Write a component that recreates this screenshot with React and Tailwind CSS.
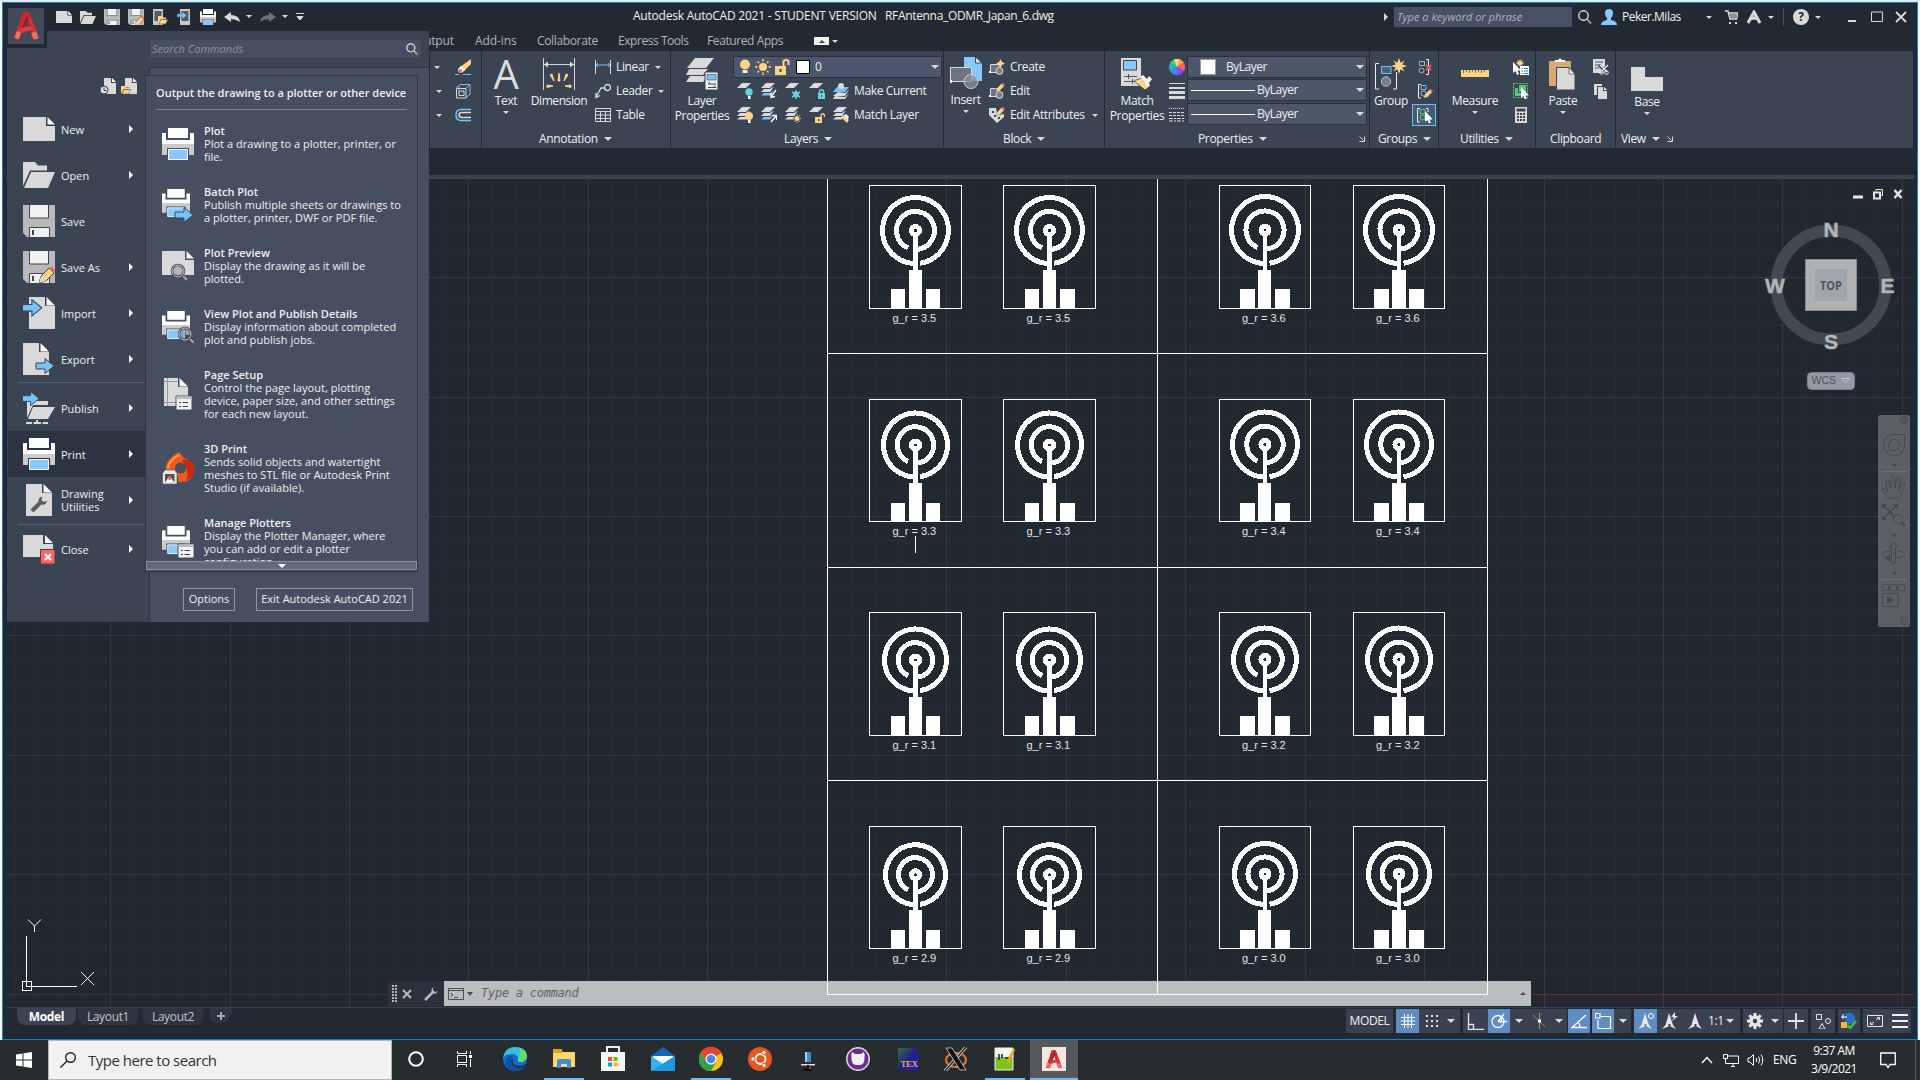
import React from "react";

const S = ({ w = 16, h = w, vw = w, vh = h, className = "", children }) => (
  <svg width={w} height={h} viewBox={`0 0 ${vw} ${vh}`} className={"shrink-0 " + className} fill="none">
    {children}
  </svg>
);

const G = "#dadada";
const B = "#74c3fb";
const Y = "#ffd480";

const Caret = ({ className = "" }) => (
  <S w={6} h={3} className={className}>
    <path d="M0 0H6L3 3Z" fill={G} />
  </S>
);
const BigCaret = ({ className = "" }) => (
  <S w={8} h={4} className={className}>
    <path d="M0 0H8L4 4Z" fill={G} />
  </S>
);
const Launcher = ({ className = "" }) => (
  <S w={6} h={6} className={className}>
    <path d="M0.5 0.5L4.5 4.5M5.5 0.5V5.5H0.5" stroke={G} />
  </S>
);

/* ---------- shared glyph fragments ---------- */
const PencilG = ({ x = 0, y = 0, s = 1 }) => (
  <g transform={`translate(${x} ${y}) scale(${s})`}>
    <path d="M0 16L2 9L10 1L15 6L7 14Z" fill={Y} stroke="#3b4453" />
    <path d="M0 16L2 9L7 14Z" fill="#d8d8d8" />
    <path d="M10 1Q12 -1 14.500 1.500Q17 4 15 6Z" fill="#ff6161" />
  </g>
);
const FloppyG = () => (
  <>
    <path d="M0 0H32V32H4L0 28Z" fill="#b9b9b9" />
    <path d="M6.500 0V13H25.500V0" fill="#f2f2f2" stroke="#3b4453" />
    <path d="M6.500 32V22.500H26.500V32" fill="#f2f2f2" stroke="#3b4453" />
    <path d="M9 25h2v5h-2z" fill="#3b4453" />
  </>
);
const PageG = () => (
  <>
    <path d="M0 0H23V9H32V24H0Z" fill="#d9d9d9" />
    <path d="M24.500 0L32 7.500H24.500Z" fill="#f7f7f7" />
  </>
);
const TallPageG = () => (
  <>
    <path d="M0 0H16V9H26V32H0Z" fill="#d9d9d9" />
    <path d="M17.500 0L26 8.500H17.500Z" fill="#f7f7f7" />
  </>
);
const PrinterG = () => (
  <>
    <path d="M0 5H4V12H28V5H32V16H0Z" fill="#fff" />
    <path d="M6 0H26V10H6Z" fill="#fff" />
    <path d="M0 16H32V27H27V20H5V27H0Z" fill="#cbcbcb" />
    <path d="M6.500 21.500H25.500V31.500H6.500Z" fill="#87c9ff" stroke="#fff" />
  </>
);
const ArrowG = ({ x = 0, y = 0, s = 1 }) => (
  <g transform={`translate(${x} ${y}) scale(${s})`}>
    <path d="M0 5H9V0.500L18 8L9 15.500V11H0Z" fill={B} stroke="#3b4453" />
  </g>
);
const LensG = ({ x = 0, y = 0, s = 1 }) => (
  <g transform={`translate(${x} ${y}) scale(${s})`}>
    <path d="M11 11L16 16" stroke="#c9a070" strokeWidth="2" />
    <circle cx="7" cy="7" r="6" fill="#464e61" fillOpacity=".25" stroke="#3b4453" strokeWidth="2.500" />
    <circle cx="7" cy="7" r="6" stroke="#d0d0d0" />
  </g>
);
const ListG = ({ x = 0, y = 0 }) => (
  <g transform={`translate(${x} ${y})`}>
    <path d="M0 0H16V14H0Z" fill="#f2f2f2" stroke="#464e61" />
    <path d="M0.500 0.500H15.500V3H0.500Z" fill="#bdbdbd" />
    <path d="M3 6.500H5M6.500 6.500H12M3 10.500H5M6.500 10.500H12" stroke="#444" />
  </g>
);

/* ---------- application menu icons ---------- */
const New32 = () => <S w={32} h={24}><PageG /></S>;
const OpenG = () => (
  <>
    <path d="M0 24V0H12L15 3.500H24V8.500H7L0 24Z" fill="#d9d9d9" />
    <path d="M8 10H32L25 26H1Z" fill="#d9d9d9" />
  </>
);
const Open32 = () => <S w={32} h={26}><OpenG /></S>;
const Save32 = () => <S w={32}><FloppyG /></S>;
const SaveAs32 = () => <S w={32}><FloppyG /><PencilG x={16} y={16} /></S>;
const Import32 = () => <S w={32}><g transform="translate(6 0)"><TallPageG /></g><ArrowG x={-1} y={2} s={1.1} /></S>;
const Export32 = () => <S w={32}><TallPageG /><ArrowG x={13} y={15} /></S>;
const Publish32 = () => (
  <S w={32}>
    <path d="M4 26V9H25V13H10Z" fill="#d9d9d9" />
    <path d="M10 15H32L25 27H5Z" fill="#d9d9d9" />
    <path d="M3 31H9M10.500 31H18M19.500 31H25M14 28V31" stroke="#d9d9d9" strokeWidth="2" />
    <ArrowG x={-1} y={-1} s={0.95} />
  </S>
);
const Print32 = () => <S w={32}><PrinterG /></S>;
const Utils32 = () => (
  <S w={32}>
    <g transform="translate(3 0)"><TallPageG /></g>
    <path d="M9 27L17 19" stroke="#5a5a5a" strokeWidth="4" />
    <path d="M17 13.500Q14.500 16 16 19.500Q20 22 23 19.500L24 17L20.500 18L18.500 16L19.500 12.500Z" fill="#5a5a5a" />
  </S>
);
const Close32 = () => (
  <S w={32} h={29}>
    <path d="M0 0H20V9H30V22H0Z" fill="#d9d9d9" />
    <path d="M22 0L30 8H22Z" fill="#f7f7f7" />
    <path d="M17.500 14.500H32V29H17.500Z" fill="#ff6464" stroke="#3b4453" />
    <path d="M22 19L28 25M28 19L22 25" stroke="#fff" strokeWidth="2.200" />
  </S>
);
const SmallPrinter = () => <g transform="scale(.875)"><PrinterG /></g>;
const Batch32 = () => <S w={32}><SmallPrinter /><ArrowG x={13} y={18} /></S>;
const Preview32 = () => <S w={32}><g transform="translate(0 1)"><PageG /></g><LensG x={9} y={14} /></S>;
const View32 = () => <S w={32}><SmallPrinter /><LensG x={16} y={16} /></S>;
const Setup32 = () => (
  <S w={32}>
    <path d="M2 0H16V9H26V28H2Z" fill="#d9d9d9" />
    <path d="M17.500 0L26 8.500H17.500Z" fill="#f7f7f7" />
    <path d="M5.500 0V28M2 3.500H16M2 24.500H14" stroke="#9a9a9a" />
    <ListG x={14} y={18} />
  </S>
);
const Print3D = () => (
  <S w={32}>
    <path d="M4 19Q2 8 17 0Q20 3 22 6Q31 8 32 17Q31 30 20 30H16V24Q10 26 8 20Z" fill="#f4581f" />
    <path d="M20 8Q29 6 32 14Q33 25 24 29Q28 20 22 11Z" fill="#c92a0c" />
    <circle cx="18.500" cy="16" r="5.500" fill="#464e61" />
    <path d="M6 17Q6 9 17 3" stroke="#ff9a3c" strokeWidth="2" />
    <path d="M0.500 21L3 18H12.500L15 21V32H0.500Z" fill="#e6e6e6" stroke="#464e61" strokeWidth=".6" />
    <path d="M3 22H12.500V30H3Z" fill="#555" />
    <path d="M3.500 30L7.500 24L12 30Z" fill="#fff" />
    <path d="M6.500 24H8.700V28H6.500Z" fill="#f4581f" />
  </S>
);
const Manage32 = () => <S w={32}><SmallPrinter /><ListG x={16} y={18} /></S>;

const ScaledIcon = ({ children, w = 16, vh = 32, h = 16 }) => <S w={w} h={h} vw={32} vh={vh}>{children}</S>;

const LogoA = ({ w, h }) => (
  <S w={w} h={h} vw={25} vh={28}>
    <path d="M9 0H15L25 26Q22 29 19 27L13 8L6 27Q2 29 0 26Z" fill="#c7202a" />
    <path d="M9 0H15L17 5L13 8L10 15L4 19Z" fill="#8f1420" />
    <path d="M3 20Q10 13 18 15L20 19Q11 18 5 23Z" fill="#e03a3c" />
    <path d="M9 0H15L23 20L20 21L13 4L5 24L1 24Z" fill="#e03a38" fillOpacity=".6" />
    <path d="M0.500 25L3 19L7 21L5 27Q2 28 0.500 25Z" fill="#e88880" fillOpacity=".8" />
    <path d="M17 21L22 19L24.500 26Q22 28 19.500 27Z" fill="#e88880" fillOpacity=".8" />
  </S>
);

/* ---------- quick access toolbar ---------- */
const FolderMini = ({ x, y }) => (
  <g transform={`translate(${x} ${y})`}>
    <path d="M0 0H4L5 1.500H8V3H3L0 8Z" fill={Y} />
    <path d="M3 3.500H10L7.500 8H0.500Z" fill={Y} stroke="#3b4453" strokeWidth=".5" />
  </g>
);
const QAT = () => (
  <div className="flex items-center">
    <div className="flex items-center gap-2">
      <ScaledIcon h={12} vh={24}><PageG /></ScaledIcon>
      <ScaledIcon h={13} vh={26}><OpenG /></ScaledIcon>
      <ScaledIcon><FloppyG /></ScaledIcon>
      <ScaledIcon><FloppyG /><PencilG x={14} y={14} s={1.2} /></ScaledIcon>
      <S><path d="M1 0H11V16H1Z" fill="#c8c8c8" /><path d="M2.500 2H9.500V12H2.500Z" fill="#555b66" /><FolderMini x={6} y={7} /></S>
      <S><path d="M4 0H14V16H4Z" fill="#c8c8c8" /><path d="M5.500 2H12.500V12H5.500Z" fill="#555b66" /><ArrowG x={1} y={2} s={0.55} /></S>
      <ScaledIcon><PrinterG /></ScaledIcon>
      <S h={11}><path d="M0 5L7 0V3Q15 3 16 10Q12 7 7 7V10Z" fill={G} /></S>
    </div>
    <Caret className="-mt-0.5 ml-[6px]" />
    <S h={11} className="ml-2"><path d="M16 5L9 0V3Q1 3 0 10Q4 7 9 7V10Z" fill="#6c717a" /></S>
    <Caret className="-mt-0.5 ml-[6px]" />
    <S w={8} h={8} className="ml-[8px]"><path d="M0 .5H8M1 3.500H7L4 7Z" stroke={G} fill={G} /></S>
  </div>
);

const TitleBar = () => (
  <div className="flex h-[28px] shrink-0 items-center text-[12px] text-[#f0f0f0]">
    <div className="w-[630px] pl-[53px]"><QAT /></div>
    <div className="-mt-[3px] flex w-[749px] tracking-[-0.22px] whitespace-pre">
      <span className="w-[252px]">Autodesk AutoCAD 2021 - STUDENT VERSION</span>
      <span className="tracking-[-0.33px]">RFAntenna_ODMR_Japan_6.dwg</span>
    </div>
    <div className="flex grow items-center pl-[2px]">
      <S w={4} h={8}><path d="M0 0L4 4L0 8Z" fill={G} /></S>
      <div className="ml-[6px] flex h-5 w-[178px] items-center bg-[#485065] pl-[3px] text-[11px] tracking-[0.02px] text-[#b0b4bd] italic">Type a keyword or phrase</div>
      <S className="ml-[6px]" w={14}><path d="M9 9L13 13.500" stroke="#c9a070" strokeWidth="1.800" /><circle cx="5.500" cy="5.500" r="4.700" stroke={G} strokeWidth="1.400" /></S>
      <S className="ml-[9px]"><path d="M4 4Q4 0 8 0Q12 0 12 4Q12 7 10 9V11Q16 12 16 16H0Q0 12 6 11V9Q4 7 4 4Z" fill="#87c9ff" /></S>
      <span className="ml-[5px] w-[84px] tracking-[-0.5px]">Peker.Milas</span>
      <Caret />
      <S w={13} h={14} className="ml-[13px]"><path d="M0 1H3L5 9H11.500L13 3H4" stroke={G} strokeWidth="1.500" /><path d="M4 4H12V8H5Z" fill="#8b8f96" /><path d="M4 12h2v2h-2zM10 12h2v2h-2z" fill={G} /></S>
      <S w={16} h={14} className="ml-[8px]"><path d="M2 13L8 2L14 13M5 9Q8 7 11 9" stroke={G} strokeWidth="3" /></S>
      <Caret className="ml-[6px]" />
      <div className="ml-[9px] h-[18px] w-px bg-[#4a5165]" />
      <div className="ml-[9px] flex size-4 items-center justify-center rounded-full bg-[#dadada] text-[12px] font-bold text-[#222933]">?</div>
      <Caret className="ml-[6px]" />
      <S w={8} h={12} className="ml-[27px]"><path d="M0 10H8" stroke={G} strokeWidth="2" /></S>
      <S w={12} h={12} className="ml-[15px]"><path d="M.5 1H11.500V10.500H.5Z" stroke={G} /></S>
      <S w={12} h={12} className="ml-[12px]"><path d="M1 1L11 11M11 1L1 11" stroke={G} strokeWidth="1.800" /></S>
    </div>
  </div>
);

const RibbonTabs = () => (
  <div className="flex h-5 shrink-0 items-center pl-[412px] text-[12px] text-[#b2b4b8]">
    <span className="w-[60px] tracking-[-0.2px]">Output</span>
    <span className="w-[62px] tracking-[-0.1px]">Add-ins</span>
    <span className="w-[81px] tracking-[-0.35px]">Collaborate</span>
    <span className="w-[89px] tracking-[-0.45px]">Express Tools</span>
    <span className="w-[107px] tracking-[-0.4px]">Featured Apps</span>
    <div className="flex h-2 w-[15px] items-center justify-center bg-[#f2f2f2]">
      <S w={6} h={3}><path d="M0 3H6L3 0Z" fill="#444" /></S>
    </div>
    <Caret className="ml-[3px]" />
  </div>
);

/* ---------- ribbon icons ---------- */
const Erase = () => <S><path d="M5 8L16 0V5L9 12Z" fill={Y} /><path d="M3 10L6 7L10 11L7 13.500Q5 14 3 12.500Z" fill="#fff" /><circle cx="5" cy="12" r="2" fill="#ff6464" /><path d="M0 15.500H4M8 15.500H16" stroke={B} /></S>;
const BoxI = () => <S><path d="M1.500 5.500H11V15H1.500ZM4 8H9V12.500H4Z" stroke={G} /><path d="M1 5L5 1.500H15V11L11 15M11 5L15 1.500M4 8V3M5 1.500H15" stroke={B} /></S>;
const Offset = () => <S><path d="M16 2.500H6Q1 2.500 1 8Q1 13.500 6 13.500H16" stroke={B} strokeWidth="1.500" /><path d="M16 5.500H7Q4 5.500 4 8Q4 10.500 7 10.500H16" stroke={G} strokeWidth="1.500" /></S>;
const DimIcon = () => (
  <S w={32}>
    <path d="M.5 0V32M31.500 0V32M1 6.500H31" stroke={G} />
    <path d="M1 6.500L5 3.500V9.500ZM31 6.500L27 3.500V9.500Z" fill={G} />
    <path d="M15 23L16 15L17 23ZM11 23L7 17L9 16ZM21 23L25 17L23 16ZM10 28L4 27V29.500ZM22 28L28 27V29.500Z" fill={Y} stroke={Y} />
  </S>
);
const LinearI = () => <S><path d="M.5 1V15M15.500 1V15" stroke={G} /><path d="M1 6H15M3 4L1 6L3 8M13 4L15 6L13 8" stroke={B} /></S>;
const LeaderI = () => <S><circle cx="12.500" cy="4.500" r="3" stroke={G} strokeWidth="1.300" /><path d="M10 5H6L1 14M1 10V14.500L5 12.500" stroke={G} strokeWidth="1.300" /></S>;
const TableI = () => <S><path d="M.5 1.500H15.500V14.500H.5ZM.5 4.500H15.500M.5 8H15.500M.5 11.500H15.500M5.500 4.500V14.500M10.500 4.500V14.500" stroke={G} /></S>;
const LayerProps = () => (
  <S w={32}>
    <path d="M9 0H28L20 10H1Z" fill={G} /><path d="M3 11H22L17 17H0Z" fill={G} /><path d="M4 18H22L17 24H0Z" fill={G} />
    <path d="M19 14H32V32H19Z" fill="#f2f2f2" stroke="#3b4453" />
    <path d="M21 16.500H30V22H21Z" fill={B} stroke="#3b4453" strokeWidth=".6" />
    <path d="M22 26H30M24 24L22 26M22 29.500H30M28 27.500L30 29.500" stroke="#3b4453" />
  </S>
);
const Bulb = ({ c = Y }) => <S w={12} h={16}><circle cx="6" cy="5.500" r="5" fill={c} /><path d="M3.500 11h5v3h-5z" fill="#eee" /></S>;
const Sun = () => <S><circle cx="8" cy="8" r="4" fill={Y} /><path d="M8 0V2.500M8 13.500V16M0 8H2.500M13.500 8H16M2.500 2.500L4 4M12 12L13.500 13.500M13.500 2.500L12 4M4 12L2.500 13.500" stroke={Y} strokeWidth="1.500" /></S>;
const Unlock = () => <S w={15} h={16}><path d="M0 7H11V16H0Z" fill={Y} /><path d="M8.500 8V3Q8.500 1 11 1Q13.500 1 13.500 3V6" stroke={Y} strokeWidth="2" /><path d="M4.500 10h2v3h-2z" fill="#3b4453" /></S>;
const Lay = ({ n = 1, mid, children }) => (
  <S>
    <path d="M5 0H14L9 5H0Z" fill={G} />
    {n > 1 && <path d="M3 6H9L13 3.500L9 9H0Z" fill={G} />}
    {n > 1 && <path d="M3 10H9L13 7L9 12.500H0Z" fill={mid || G} />}
    {children}
  </S>
);
const layerIcons = [
  [
    <Lay><circle cx="12" cy="9" r="3.700" fill="#63d8e0" /><path d="M11 13h2.500v3h-2.500z" fill="#fff" /></Lay>,
    <Lay n={2} mid={B}><path d="M15 7L10 14M10 10V14.500L14 13.500" stroke="#fff" strokeWidth="1.300" /></Lay>,
    <Lay><path d="M11 7V16M7 9L15 14M15 9L7 14" stroke="#63d8e0" strokeWidth="1.500" /><circle cx="11" cy="11.500" r="2.500" stroke="#63d8e0" /></Lay>,
    <Lay><path d="M9 10H16V16H9Z" fill="#63d8e0" /><path d="M10.500 10V8Q12.500 5.500 14.500 8V10" stroke="#63d8e0" strokeWidth="1.300" /><path d="M12 12h1v2h-1z" fill="#3b4453" /></Lay>,
    <S><path d="M4 4H16L12 9H0Z" fill={B} /><circle cx="8" cy="3" r="3" fill={G} /><path d="M5 9L12 10L16 7L12 13H0Z" fill={G} /><path d="M2 13L12 14L16 10.500L12 16H0Z" fill={G} /></S>,
  ],
  [
    <Lay n={2}><circle cx="12" cy="9" r="4" fill={Y} /><path d="M11 13h2.500v3h-2.500z" fill="#fff" /></Lay>,
    <Lay n={2} mid={B}><path d="M10 15L15 9M11 8.500H15.500V13" stroke="#fff" strokeWidth="1.300" /></Lay>,
    <Lay n={2}><circle cx="12" cy="11.500" r="3.500" fill="#3b4453" /><circle cx="12" cy="11.500" r="2.500" fill={Y} /><path d="M12 7V16M7.500 11.500H16.500M9 8L15 15M15 8L9 15" stroke={Y} strokeWidth=".8" strokeDasharray="1.5 6" /></Lay>,
    <Lay><path d="M6 10H13V16H6Z" fill={Y} /><path d="M12 10V8Q13.500 5.500 15.500 8V10" stroke={Y} strokeWidth="1.300" /><path d="M9 12h1.500v2h-1.500z" fill="#3b4453" /></Lay>,
    <Lay n={2}><path d="M8 10L14 16L16 13L11 8Z" fill={Y} /><path d="M11 8L13 7L16 10L14.500 12Z" fill="#fff" /></Lay>,
  ],
];
const InsertI = () => (
  <S w={32}>
    <path d="M14 0H25L32 6V24H14Z" fill="#87c9ff" /><path d="M25.500 0V6H32Z" fill="#d8ecff" stroke="#3b4453" />
    <path d="M.5 10.500H21.500V24.500H.5Z" fill="#6d7380" stroke={G} /><circle cx="21" cy="24.500" r="7" fill="#8b9098" fillOpacity=".75" stroke="#cfcfcf" /><path d="M-1 23h3v3h-3z" fill="#fff" />
  </S>
);
const BlockBase = () => <><path d="M1.500 5.500H10V13.500H1.500Z" fill="#6d7380" stroke={G} /><circle cx="10.500" cy="12" r="3.500" fill="#7b808b" stroke={G} /><path d="M0 12h2v2h-2z" fill="#fff" /></>;
const CreateI = () => <S><BlockBase /><path d="M11.500 0L13 3L16 4.500L13 6L11.500 9L10 6L7 4.500L10 3Z" fill={Y} /></S>;
const EditI = () => <S><BlockBase /><PencilG x={7} y={0} s={0.55} /></S>;
const AttrI = () => <S><path d="M0 1H7L8 6L10 8L15 7V10L8 16L0 8Z" fill={G} /><path d="M3 4h2v2h-2zM5 8h2v2h-2zM9 10h2v2h-2z" fill="#3b4453" /><PencilG x={7} y={0} s={0.55} /></S>;
const MatchI = () => (
  <S w={32}>
    <path d="M0 0H20V28H0Z" fill={G} /><path d="M2.500 2.500H15.500V12H2.500Z" fill="#87c9ff" stroke="#3b4453" />
    <path d="M3 18.500H16M7.500 16V21M3 23.500H14M11.500 21V26" stroke="#555" />
    <path d="M13 23L20 20L28 29L24 32Z" fill={Y} stroke="#3b4453" strokeWidth=".8" /><path d="M19 19L22 17L26 21L28 18L31 21L28 25L29 28L27 29Z" fill="#f4f4f4" />
  </S>
);
const Wheel = () => (
  <S>
    {["#ff9f45", "#ff5d5d", "#7c4dff", "#3b8ef0", "#1fb6c9", "#55c878"].map((c, i) => (
      <path key={c} d="M8 8L8 0A8 8 0 0 1 14.930 4Z" fill={c} transform={`rotate(${i * 60} 8 8)`} />
    ))}
    <path d="M8 8L5 .6A8 8 0 0 1 11 .6Z" fill={Y} />
  </S>
);
const Weights = () => <S><path d="M0 .5H16" stroke={G} /><path d="M0 5H16" stroke={G} strokeWidth="2" /><path d="M0 9.500H16" stroke={G} strokeWidth="3" /><path d="M0 14.500H16" stroke={G} strokeWidth="3" /></S>;
const Types = () => <S><path d="M0 1.500H16" stroke={G} strokeDasharray="1 1" /><path d="M0 5.500H16M0 8.500H16" stroke={G} strokeDasharray="3 1" /><path d="M0 11.500H16M0 14H16" stroke={G} strokeDasharray="4 1 2 1" /></S>;
const Star = ({ x, y, r }) => (
  <g transform={`translate(${x} ${y}) scale(${r})`}>
    <path d="M0 -1L.2 -.4L.7 -.7L.4 -.2L1 0L.4 .2L.7 .7L.2 .4L0 1L-.2 .4L-.7 .7L-.4 .2L-1 0L-.4 -.2L-.7 -.7L-.2 -.4Z" fill={Y} />
  </g>
);
const GroupI = () => (
  <S w={32}>
    <path d="M4 5.500H.5V31H4M18 31H21.500V14" stroke="#eee" /><path d="M6.500 8.500H16V15.500H6.500Z" stroke={B} fill="#46627c" /><circle cx="11" cy="23.500" r="4.700" fill="#777c86" stroke="#c0c0c0" /><Star x={24} y={8} r={8} />
  </S>
);
const GrpBase = ({ c = B }) => <><path d="M4 1.500H1.500V15H4" stroke="#eee" /><path d="M4 2.500H9V6.500H4Z" stroke={c} /><circle cx="6.500" cy="10.500" r="2.500" stroke={c === B ? "#b5b5b5" : c} /></>;
const Ungroup = () => <S><path d="M9 .5H11.500V15.500H9" stroke="#eee" /><path d="M2.500 2.500H7.500V6.500H2.500Z" stroke={B} /><circle cx="4.500" cy="11.500" r="2.500" stroke="#b5b5b5" /><path d="M9 6L14 11M14 6L9 11" stroke="#f05050" strokeWidth="2" /></S>;
const GroupEdit = () => <S><GrpBase /><PencilG x={7} y={6} s={0.55} /></S>;
const Cursor = ({ x, y }) => <path transform={`translate(${x} ${y})`} d="M0 0V11L2.500 9L4 13L6 12L4.500 8.500H8Z" fill="#fff" />;
const GroupSel = () => <S><GrpBase c="#58c97a" /><path d="M10 1.500H12V5" stroke="#eee" /><Cursor x={9} y={4} /></S>;
const Ruler = () => <S w={28} h={32}><path d="M0 12H28V19H0Z" fill={Y} /><path d="M2.500 12V15M5.500 12V14M8.500 12V15M11.500 12V14M14.500 12V15M17.500 12V14M20.500 12V15M23.500 12V14" stroke="#7a6a45" /></S>;
const QSel = () => <S><Cursor x={0} y={3} /><Star x={7} y={4} r={4.5} /><path d="M7 7H16V16H7Z" fill="#fff" /><path d="M8.500 9.500H10M11 9.500H15M8.500 12H10M11 12H15M8.500 14.500H10M11 14.500H15" stroke="#1d86d8" /></S>;
const SelAll = () => <S><path d="M.5 .5H14.500V14.500H.5Z" stroke="#58c97a" strokeDasharray="2 1" /><path d="M2 5H5V10H9V13H2ZM6 2H13V9H6Z" fill="#58c97a" /><Cursor x={8} y={4} /></S>;
const Calc = () => <S><path d="M2 0H14V16H2Z" fill={G} /><path d="M3.500 1.500H12.500V4.500H3.500Z" fill="#444" /><path d="M4 7H12M4 10H12M4 13H12" stroke="#444" strokeWidth="2" strokeDasharray="2 1" /></S>;
const PasteI = () => <S w={28} h={32}><path d="M0 3H22V28H0Z" fill="#d9a873" /><path d="M6 4V2H9Q11 -1 13 2H16V4Z" fill="#fff" /><path d="M7.500 9.500H20L26 16V32H7.500Z" fill={G} stroke="#3b4453" /><path d="M20 9.500V16H26Z" fill="#f5f5f5" stroke="#3b4453" strokeWidth=".7" /></S>;
const Cut = () => <S><path d="M0 0H12V14H0Z" fill={G} /><path d="M2 3H10M2 6H8M2 9H6" stroke="#555" /><path d="M6 6L14 14M15 6L9 13" stroke="#3b4453" strokeWidth="3" /><path d="M7 6L14 13M15 6L9 12" stroke="#eee" strokeWidth="1.300" /><circle cx="8.500" cy="13.500" r="1.800" stroke="#eee" /><circle cx="13.500" cy="13.500" r="1.800" stroke="#eee" /></S>;
const Copy = () => <S><path d="M1 1H9V3H4V12H1Z" fill={G} /><path d="M5 4H10V8H14V16H5Z" fill={G} /><path d="M11 4L14 7H11Z" fill="#fff" /></S>;
const BaseI = () => <S w={32} h={24}><path d="M0 0H14V10H32V24H0Z" fill={G} /></S>;

const Panel = ({ className, title, caret = true, titleClass = "", launcher = "", children }) => (
  <div className={"flex shrink-0 flex-col bg-[#3b4453] " + className}>
    <div className="flex h-[79px] pt-1">{children}</div>
    <div className={"flex h-[18px] items-center " + titleClass}>
      <span>{title}</span>
      {title && caret && <BigCaret className="ml-[6px]" />}
      {launcher && <Launcher className={launcher} />}
    </div>
  </div>
);
const Big = ({ className = "", icon, lines, caret }) => (
  <div className={"flex shrink-0 flex-col items-center pt-[3px] leading-[15px] " + className}>
    {icon}
    <div className="mt-[3px] text-center whitespace-pre">{lines}</div>
    {caret && <Caret className="mt-[3px]" />}
  </div>
);
const Row = ({ className = "", children }) => <div className={"flex h-6 items-center whitespace-nowrap " + className}>{children}</div>;
const Combo = ({ className = "", children }) => (
  <div className={"flex h-[22px] items-center border border-[#2b323e] bg-[#4c576c] " + className}>
    {children}
    <BigCaret className="mr-[2px] ml-auto" />
  </div>
);

const Ribbon = () => (
  <div className="flex h-[97px] shrink-0 pl-[427px] text-[12px] tracking-[-0.35px] text-[#f0f0f0]">
    <Panel className="w-[52px] border-r border-[#222933]">
      <div className="flex flex-col">
        <Row className="pl-1"><Caret /><span className="w-[15px]" /><Erase /></Row>
        <Row className="pl-[6px]"><Caret /><span className="w-[13px]" /><BoxI /></Row>
        <Row className="pl-[6px]"><Caret /><span className="w-[13px]" /><Offset /></Row>
      </div>
    </Panel>
    <Panel className="w-[189px] border-r border-[#222933]" title="Annotation" titleClass="pl-[57px]">
      <Big className="w-[48px]" icon={<div className="flex h-8 items-center justify-center text-[40px] leading-8 text-[#dadada]">A</div>} lines="Text" caret />
      <Big className="w-[58px] tracking-[-0.42px]" icon={<DimIcon />} lines="Dimension" />
      <div className="pl-[7px]">
        <Row><LinearI /><span className="ml-[5px] w-[39px]">Linear</span><Caret /></Row>
        <Row><LeaderI /><span className="ml-[5px] w-[42px]">Leader</span><Caret /></Row>
        <Row><TableI /><span className="ml-[5px]">Table</span></Row>
      </div>
    </Panel>
    <Panel className="w-[273px] border-r border-[#222933]" title="Layers" titleClass="pl-[113px]">
      <Big className="w-[62px]" icon={<LayerProps />} lines={"Layer\nProperties"} />
      <div>
        <Row>
          <Combo className="w-[209px] pl-[5px]">
            <Bulb /><span className="w-[4px]" /><Sun /><span className="w-[4px]" /><Unlock />
            <span className="ml-[6px] size-[14px] border border-black bg-white" />
            <span className="ml-[5px]">0</span>
          </Combo>
        </Row>
        {layerIcons.map((icons, i) => (
          <Row key={i} className="gap-2 pl-1">
            {icons.map((ic, k) => <React.Fragment key={k}>{ic}</React.Fragment>)}
            <span className="-ml-[3px]">{i ? "Match Layer" : "Make Current"}</span>
          </Row>
        ))}
      </div>
    </Panel>
    <Panel className="w-[161px] border-r border-[#222933]" title="Block" titleClass="pl-[59px]">
      <Big className="-mt-px w-[43px]" icon={<InsertI />} lines="Insert" caret />
      <div className="pl-[2px]">
        <Row><CreateI /><span className="ml-[5px]">Create</span></Row>
        <Row><EditI /><span className="ml-[5px]">Edit</span></Row>
        <Row><AttrI /><span className="ml-[5px] w-[82px]">Edit Attributes</span><Caret /></Row>
      </div>
    </Panel>
    <Panel className="w-[265px] border-r border-[#222933]" title="Properties" titleClass="pl-[93px]" launcher="ml-[92px]">
      <Big className="w-[64px]" icon={<MatchI />} lines={"Match\nProperties"} />
      <div>
        <Row><Wheel />
          <Combo className="ml-[2px] w-[180px] pl-3"><span className="size-4 border border-[#999] bg-white" /><span className="ml-[10px] tracking-[-0.5px]">ByLayer</span></Combo>
        </Row>
        <Row><Weights />
          <Combo className="-mt-[2px] ml-[2px] w-[180px] pl-[3px]"><span className="h-px w-16 bg-white" /><span className="ml-[2px] tracking-[-0.5px]">ByLayer</span></Combo>
        </Row>
        <Row><Types />
          <Combo className="-mt-[2px] ml-[2px] w-[180px] pl-[3px]"><span className="h-px w-16 bg-white" /><span className="ml-[2px] tracking-[-0.5px]">ByLayer</span></Combo>
        </Row>
      </div>
    </Panel>
    <Panel className="w-[69px] border-r border-[#222933]" title="Groups" titleClass="pl-2">
      <Big className="w-[42px]" icon={<GroupI />} lines="Group" />
      <div>
        <Row className="pl-[5px]"><Ungroup /></Row>
        <Row className="pl-[5px]"><GroupEdit /></Row>
        <Row><div className="flex h-[22px] w-6 items-center justify-center border border-[#6fbdf5] bg-[#465a74]"><GroupSel /></div></Row>
      </div>
    </Panel>
    <Panel className="w-[97px] border-r border-[#222933]" title="Utilities" titleClass="pl-[21px]">
      <Big className="w-[72px]" icon={<Ruler />} lines="Measure" caret />
      <div className="pl-[2px]">
        <Row><QSel /></Row><Row><SelAll /></Row><Row><Calc /></Row>
      </div>
    </Panel>
    <Panel className="w-[80px] border-r border-[#222933]" title="Clipboard" caret={false} titleClass="pl-[14px]">
      <Big className="w-[54px]" icon={<PasteI />} lines="Paste" caret />
      <div className="pl-[3px]">
        <Row><Cut /></Row><Row><Copy /></Row>
      </div>
    </Panel>
    <Panel className="w-[297px]" title="View" titleClass="pl-[5px]" launcher="ml-[7px]">
      <Big className="w-[62px] pt-[12px]" icon={<BaseI />} lines={"Base"} caret />
    </Panel>
  </div>
);

/* ---------- application menu ---------- */
const MenuRow = ({ icon, label, arrow = true, active }) => (
  <div className={"ml-px flex h-[46px] w-[137px] shrink-0 items-center pl-[15px] " + (active ? "bg-[#2d3441]" : "")}>
    <div className="flex w-8 justify-center">{icon}</div>
    <span className="ml-[6px] w-[68px] leading-[13px] whitespace-pre">{label}</span>
    {arrow && <S w={4} h={8}><path d="M0 0L4 4L0 8Z" fill="#fff" /></S>}
  </div>
);
const SubItem = ({ icon, title, lines }) => (
  <div className="flex shrink-0 items-center py-[11px] pl-4">
    {icon}
    <div className="ml-[10px] text-[11px] leading-[13px] tracking-[0.03px] whitespace-pre">
      <div className="font-semibold tracking-[0px]">{title}</div>
      {lines}
    </div>
  </div>
);

const AppMenu = () => (
  <div className="absolute top-[29px] left-[7px] z-20 flex h-[591px] w-[422px] flex-col bg-[#3b4453] text-[11px] text-[#f0f0f0]">
    <div className="mt-[9px] ml-[143px] flex h-[18px] w-[271px] items-center justify-between bg-[#464e61] pr-[3px] pl-[2px] text-[11px] text-[#8c93a1] italic">
      Search Commands
      <S w={12}><path d="M8 8L11.500 11.500" stroke="#c9a070" strokeWidth="1.800" /><circle cx="4.800" cy="4.800" r="4" stroke={G} strokeWidth="1.300" /></S>
    </div>
    <div className="mt-[9px] flex grow">
      <div className="flex w-[142px] flex-col">
        <div className="flex h-[39px] items-start gap-[5px] pt-[11px] pl-[93px]">
          <S><path d="M4 0H11V5H16V16H4Z" fill={G} /><path d="M12 0L16 4H12Z" fill="#fff" /><circle cx="4" cy="12" r="4" fill="#ddd" stroke="#3b4453" /><path d="M4 9.500V12.500H6.500" stroke="#444" /></S>
          <S><path d="M4 0H11V5H16V16H4Z" fill={G} /><path d="M12 0L16 4H12Z" fill="#fff" /><path d="M0 9H8V16H0Z" fill="#3b4453" /><FolderMini x={0} y={8} /></S>
        </div>
        <MenuRow icon={<New32 />} label="New" />
        <MenuRow icon={<Open32 />} label="Open" />
        <MenuRow icon={<Save32 />} label="Save" arrow={false} />
        <MenuRow icon={<SaveAs32 />} label="Save As" />
        <MenuRow icon={<Import32 />} label="Import" />
        <MenuRow icon={<Export32 />} label="Export" />
        <div className="mb-[2px] ml-[11px] h-px w-[127px] shrink-0 bg-[#576070]" />
        <MenuRow icon={<Publish32 />} label="Publish" />
        <MenuRow icon={<Print32 />} label="Print" active />
        <MenuRow icon={<Utils32 />} label={"Drawing\nUtilities"} />
        <div className="my-px ml-[11px] h-px w-[127px] shrink-0 bg-[#576070]" />
        <MenuRow icon={<Close32 />} label="Close" />
      </div>
      <div className="flex grow flex-col items-start border-t border-l border-[#2e3644] bg-[#464e61]">
        <div className="relative mt-[7px] -ml-[5px] flex h-[497px] w-[273px] flex-col border border-[#2e3644] bg-[#464e61]">
          <div className="mx-[10px] h-[34px] shrink-0 border-b border-[#7c8598] pt-[9px] text-[11px] leading-[16px] font-semibold whitespace-nowrap">Output the drawing to a plotter or other device</div>
          <div className="mt-[3px] flex h-[448px] flex-col overflow-hidden">
            <SubItem icon={<Print32 />} title="Plot" lines={"Plot a drawing to a plotter, printer, or\nfile."} />
            <SubItem icon={<Batch32 />} title="Batch Plot" lines={"Publish multiple sheets or drawings to\na plotter, printer, DWF or PDF file."} />
            <SubItem icon={<Preview32 />} title="Plot Preview" lines={"Display the drawing as it will be\nplotted."} />
            <SubItem icon={<View32 />} title="View Plot and Publish Details" lines={"Display information about completed\nplot and publish jobs."} />
            <SubItem icon={<Setup32 />} title="Page Setup" lines={"Control the page layout, plotting\ndevice, paper size, and other settings\nfor each new layout."} />
            <SubItem icon={<Print3D />} title="3D Print" lines={"Sends solid objects and watertight\nmeshes to STL file or Autodesk Print\nStudio (if available)."} />
            <SubItem icon={<Manage32 />} title="Manage Plotters" lines={"Display the Plotter Manager, where\nyou can add or edit a plotter\nconfiguration."} />
          </div>
          <div className="flex h-[9px] shrink-0 items-center justify-center border border-[#8790a0] bg-[#606a7c]">
            <S w={8} h={4}><path d="M0 0H8L4 4Z" fill="#fff" /></S>
          </div>
        </div>
        <div className="mt-[16px] ml-[33px] flex gap-[21px]">
          <div className="flex h-[23px] w-[52px] items-center justify-center border border-[#8e97a7]">Options</div>
          <div className="flex h-[23px] w-[157px] items-center justify-center border border-[#8e97a7] whitespace-nowrap">Exit Autodesk AutoCAD 2021</div>
        </div>
      </div>
    </div>
  </div>
);

/* ---------- model space ---------- */
const range = (from, step, to) => {
  const out = [];
  for (let i = 0, v = from; v < to; i++, v = from + step * i) out.push([Math.round(v), i]);
  return out;
};
const GridLines = () => (
  <svg className="absolute inset-0" width="1908" height="828" viewBox="6 179 1908 828" shapeRendering="crispEdges">
    {range(14.55, 23.89, 1914).map(([x, i]) => (i + 1) % 5 !== 0 && <path key={x} d={`M${x + 0.5} 179V1007`} stroke="#262d38" />)}
    {range(182, 23.88, 1007).map(([y, i]) => (i + 1) % 5 !== 0 && <path key={y} d={`M6 ${y + 0.5}H1914`} stroke="#262d38" />)}
    {range(110.1, 119.45, 1914).map(([x]) => <path key={x} d={`M${x + 0.5} 179V1007`} stroke="#30384a" />)}
    {range(277.2, 119.4, 1007).map(([y]) => <path key={y} d={`M6 ${y + 0.5}H1914`} stroke="#30384a" />)}
    <path d="M1488 994.500H1914" stroke="#7c2528" />
  </svg>
);

const rows = [
  { top: 185, bot: 308, cy: [230.5, 230], pad: 270, side: 289, ro: 35.5, ri: 21.5, base: 322, labels: ["3.5", "3.6"] },
  { top: 399, bot: 521, cy: [445, 444.5], pad: 483, side: 503, ro: 34.5, ri: 20.7, base: 535, labels: ["3.3", "3.4"] },
  { top: 612, bot: 735, cy: [660, 659.5], pad: 697, side: 716, ro: 33.5, ri: 19.8, base: 749, labels: ["3.1", "3.2"] },
  { top: 826, bot: 948, cy: [874.7, 874], pad: 910, side: 930, ro: 32.5, ri: 19.5, base: 962, labels: ["2.9", "3.0"] },
];
const cols = [
  { x: 869, w: 92, cx: 915.5, tx: 892.5, g: 0, pads: [[891, 14], [909, 13], [926, 14]] },
  { x: 1003, w: 92, cx: 1049.5, tx: 1026.5, g: 0, pads: [[1025, 14], [1043, 13], [1060, 15]] },
  { x: 1219, w: 91, cx: 1265, tx: 1242, g: 1, pads: [[1240, 15], [1258, 13], [1275, 15]] },
  { x: 1353, w: 91, cx: 1399, tx: 1376, g: 1, pads: [[1374, 15], [1392, 14], [1409, 15]] },
];
const arc = (cx, cy, r, a, b) => {
  const y = (dx) => cy + Math.sqrt(r * r - dx * dx);
  return `M${cx + a} ${y(a)}A${r} ${r} 0 1 0 ${cx + b} ${y(b)}`;
};
const Antenna = ({ row, col }) => {
  const cy = row.cy[col.g];
  const ro = row.ro + col.g * 0.5 - 2.5;
  const ri = row.ri - 2.5;
  const { cx } = col;
  return (
    <g>
      <g shapeRendering="crispEdges">
        <rect x={col.x + 0.5} y={row.top + 0.5} width={col.w} height={row.bot - row.top} stroke="#fff" />
        <path d={arc(cx, cy, ro, 4.5, -0.5)} stroke="#fff" strokeWidth="5" />
        <path d={arc(cx, cy, ri, 0.5, -7.5)} stroke="#fff" strokeWidth="5" />
        <circle cx={cx} cy={cy} r="4" stroke="#fff" strokeWidth="5" />
        <path d={`M${cx} ${cy + 3}V${row.pad + 1}`} stroke="#fff" strokeWidth={col.g ? 4 : 5} />
        {col.pads.map(([x, w], i) => {
          const y = i === 1 ? row.pad : row.side;
          return <rect key={x} x={x} y={y} width={w} height={row.bot - y} fill="#fff" />;
        })}
      </g>
      <text x={col.tx} y={row.base} fill="#e4e4e4" fontSize="11" fontFamily="Liberation Sans, Arial, sans-serif">{`g_r = ${row.labels[col.g]}`}</text>
    </g>
  );
};
const Drawing = () => (
  <svg className="pointer-events-none absolute inset-0" width="1908" height="828" viewBox="6 179 1908 828" fill="none">
    <path d="M827.500 179V994.500M1157.500 179V994.500M1487.500 179V994.500M827 353.500H1488M827 567.500H1488M827 780.500H1488M827 994.500H1488M915.500 536V553" stroke="#fff" shapeRendering="crispEdges" />
    {rows.map((r) => cols.map((c) => <Antenna key={r.top + "-" + c.x} row={r} col={c} />))}
    <path d="M22.500 981.500H31.500V990.500H22.500ZM26.500 936V986.500H77" stroke="#fff" shapeRendering="crispEdges" />
    <path d="M28 919.500L34.500 926L41 919.500M34.500 926V932M81 972L94 985M94 972L81 985" stroke="#fff" />
  </svg>
);

const ViewCube = () => (
  <svg className="absolute top-[31px] right-[14px]" width="140" height="190" viewBox="1760 210 140 190" fill="none">
    <circle cx="1831" cy="285" r="54.500" stroke="#434950" strokeWidth="12" />
    <path d="M1805.500 259.500H1856.500V310.500H1805.500Z" fill="#b0b1b3" stroke="#8a8c90" />
    <path d="M1815 269H1847V301H1815Z" fill="#a0a6ab" />
    <g fontFamily="Liberation Sans, Arial, sans-serif" fontWeight="bold" textAnchor="middle">
      <g fontSize="21" fill="#b3b4b6" stroke="#b3b4b6" strokeWidth=".5">
        <text x="1831" y="236.500">N</text><text x="1831" y="349">S</text><text x="1775" y="292.500">W</text><text x="1887.500" y="292.500">E</text>
      </g>
      <text x="1831" y="289.500" fontSize="13" fontFamily="Open Sans, sans-serif" textLength="22" lengthAdjust="spacingAndGlyphs" fill="#50545c">TOP</text>
    </g>
    <rect x="1807.500" y="372.500" width="47" height="17" rx="4" fill="#9698a5" stroke="#7c7f8c" />
    <text x="1811.500" y="384" fontSize="10.500" fontFamily="Liberation Sans, Arial, sans-serif" fill="#4a4e58">WCS</text>
    <path d="M1841.500 378.500H1849.500L1845.500 382.500Z" stroke="#c3c5cf" />
  </svg>
);
const NavBar = () => (
  <svg className="absolute top-[236px] right-[4px]" width="32" height="212" viewBox="0 0 32 212" fill="none">
    <rect width="32" height="212" rx="2.500" fill="#5b6064" />
    <g stroke="#454a52">
      <circle cx="26" cy="5" r="3.500" /><path d="M24 3L28 7M28 3L24 7" />
      <path d="M16 19.500H26.500V30Q26 40.500 16 40.500Q5.500 40 5.500 30Q5.500 20 16 19.500Z" /><circle cx="16" cy="30" r="5.500" /><path d="M12 34L8 38M20 34L24 38" />
      <path d="M10 83Q4 76 4.500 73Q7 72 10 77L7.500 66Q9 64 11 66L13 74L13 62Q15 60 16.500 62L17 73L19 62Q21 61 22 63L21 75L24 68Q27 67 26.500 70L23 80Q22 83 20 83Z" />
      <path d="M5 90L19 104M19 90L5 104" strokeWidth="1.500" /><circle cx="20" cy="104" r="4.500" fill="#5b6064" /><path d="M23 107L27 111" strokeWidth="2.500" />
      <path d="M4 56.500H29M4 164.500H29" stroke="#6a7076" />
      <path d="M13.500 148V132H11.500L15.500 127L19.500 132H17.500V148ZM11 143Q4 142 4.500 139Q6 136 12 136M19 136Q26 136 26.500 139Q25 143 18 143" />
      <path d="M4.500 169.500H10.500V175.500H4.500ZM12.500 169.500H18.500V175.500H12.500ZM20.500 169.500H26.500V175.500H20.500ZM4.500 178.500H20.500V191.500H4.500Z" />
      <circle cx="26" cy="206" r="3.500" /><path d="M24 206H28" />
    </g>
    <path d="M4 89H9L4 94ZM20 89V94L15 89ZM4 105V100L9 105ZM9 181L16 185L9 189ZM7 143L12 139V147ZM14 49H19L16.500 52ZM14 119H19L16.500 122ZM14 157H19L16.500 160Z" fill="#43484f" />
  </svg>
);
const DocButtons = () => (
  <div className="absolute top-[9px] right-[11px] flex items-center gap-[10px]">
    <S w={10} h={12}><path d="M0 9H10" stroke="#e6e6e6" strokeWidth="3" /></S>
    <S w={10} h={12}><path d="M3 3V1.500H9.500V7.500H8" stroke="#e6e6e6" /><path d="M1 4.500H7V10.500H1Z" stroke="#e6e6e6" strokeWidth="2" /></S>
    <S w={10} h={12}><path d="M1.500 2L8.500 10M8.500 2L1.500 10" stroke="#e6e6e6" strokeWidth="2.500" /></S>
  </div>
);
const CommandLine = () => (
  <div className="absolute top-[802px] left-[382px] flex h-[25px] w-[1143px]">
    <div className="flex w-[56px] shrink-0 items-center bg-[#2b313d] pl-1">
      <S w={5} h={17}><path d="M1 0V17M4 0V17" stroke="#b5b5b5" strokeWidth="2" strokeDasharray="2 1" /></S>
      <S w={10} h={10} className="ml-[5px]"><path d="M1 1L9 9M9 1L1 9" stroke="#b9b9b9" strokeWidth="2" /></S>
      <S w={14} h={14} className="ml-[12px]"><path d="M1 13L9 5" stroke="#b9b9b9" strokeWidth="2.500" /><path d="M9 0Q6.500 3 8 6Q12 8 14 4L11 5L9 3Z" fill="#b9b9b9" /></S>
    </div>
    <div className="flex grow items-center bg-[#bcbdbf] pl-1">
      <S w={16} h={12}><path d="M.5 .5H15.500V11.500H.5ZM.5 2.500H15.500M2.500 5L5 7L2.500 9M6 9.500H10" stroke="#4c4c4c" /></S>
      <S w={6} h={4} className="ml-[3px]"><path d="M0 0H6L3 4Z" fill="#4c4c4c" /></S>
      <span className="-mt-px ml-[8px] font-['DejaVu_Sans_Mono',monospace] text-[12px] tracking-[-0.26px] text-[#606265] italic">Type a command</span>
      <S w={6} h={3} className="mr-[5px] ml-auto"><path d="M0 3H6L3 0Z" fill="#4c4c4c" /></S>
    </div>
  </div>
);
const Canvas = () => (
  <div className="relative mr-[3px] ml-[3px] h-[828px] shrink-0 overflow-hidden bg-[#212830]">
    <GridLines />
    <CommandLine />
    <Drawing />
    <DocButtons />
    <ViewCube />
    <NavBar />
  </div>
);

/* ---------- status bar ---------- */
const Cell = ({ className = "", on, children }) => (
  <div className={"flex h-6 shrink-0 items-center justify-center " + (on ? "bg-[#5f8dc3] " : "bg-[#3a4252] ") + className}>{children}</div>
);
const Anno = ({ children }) => <S w={16} h={18}><path d="M7 1L11 13L14 17L8.500 14.500V12H6.500V14.500L0 17L3.500 13Z" fill="#e6e6e6" />{children}</S>;
const StatusBar = () => (
  <div className="ml-[3px] flex h-8 shrink-0 items-start border-t border-[#3a414e] text-[12px] tracking-[-0.35px] text-[#c2c4c8]">
    <div className="flex w-[1340px] items-start pl-[11px]">
      <div className="flex h-[17px] w-[59px] items-center justify-center rounded-b-lg bg-[#3b4453] font-bold text-white">Model</div>
      <div className="ml-[2px] flex h-[17px] w-[60px] items-center justify-center rounded-b-lg bg-[#2e3541]">Layout1</div>
      <div className="ml-[5px] flex h-[17px] w-[60px] items-center justify-center rounded-b-lg bg-[#2e3541]">Layout2</div>
      <div className="ml-[7px] flex h-[15px] w-[22px] items-center justify-center rounded-br-xl rounded-bl-md bg-[#2e3541]">
        <S w={8}><path d="M4 0V8M0 4H8" stroke="#a8abb0" strokeWidth="2" /></S>
      </div>
    </div>
    <div className="mt-px flex text-[#f0f0f0]">
      <Cell className="w-[47px]">MODEL</Cell>
      <Cell className="ml-[3px] w-[23px]" on><S><path d="M4.500 1V15M8 1V15M11.500 1V15M1 4.500H15M1 8H15M1 11.500H15" stroke="#fff" /></S></Cell>
      <Cell className="w-[26px]"><S w={14}><path d="M1 2H14M1 7H14M1 12H14" stroke="#e6e6e6" strokeWidth="2" strokeDasharray="2 3" /></S></Cell>
      <Cell className="w-[15px] pr-1"><BigCaret /></Cell>
      <Cell className="ml-[3px] w-[25px]"><S w={17} h={17}><path d="M1.500 0V16.500H17M1.500 11.500H6.500V16.500" stroke="#e6e6e6" strokeWidth="1.300" /></S></Cell>
      <Cell className="w-[22px]" on><S w={16}><circle cx="7" cy="8.500" r="6" stroke="#fff" strokeWidth="1.300" /><path d="M7 8.500H16M7 8.500L13 1M10 5Q11 7 10 10" stroke="#fff" strokeWidth="1.300" /></S></Cell>
      <Cell className="w-[17px]"><BigCaret /></Cell>
      <Cell className="w-[23px]"><S w={14} h={16}><path d="M1 2L13 14" stroke="#f06060" /><path d="M7.500 0V16" stroke="#4ec870" /><path d="M6 6.500h3v3h-3z" fill="#fff" /></S></Cell>
      <Cell className="w-[17px]"><BigCaret /></Cell>
      <Cell className="ml-px w-[22px]" on><S w={16}><path d="M16 14.500H1L15 2M7 9.500Q9 11 9 14" stroke="#fff" strokeWidth="1.300" /></S></Cell>
      <Cell className="ml-[2px] w-[22px]" on><S w={17} h={17}><path d="M6 3.500H15.500V15.500H3V7M.5 .5H5V5H.5Z" stroke="#fff" strokeWidth="1.200" /></S></Cell>
      <Cell className="w-[17px] pl-px"><BigCaret /></Cell>
      <Cell className="ml-[3px] w-[23px]" on><Anno><circle cx="13" cy="4" r="2.500" stroke="#fff" /></Anno></Cell>
      <Cell className="w-[25px]"><Anno><path d="M13 0L9 5H12L10 9L16 4H13Z" fill="#e6e6e6" /></Anno></Cell>
      <Cell className="w-[25px] pl-[2px]"><Anno /></Cell>
      <Cell className="w-[33px] justify-start gap-1"><span className="w-[14px] pl-px text-center">1:1</span><BigCaret className="ml-[1px]" /></Cell>
      <Cell className="ml-[3px] w-[23px]"><S><circle cx="8" cy="8" r="4" stroke="#e6e6e6" strokeWidth="3.500" /><path d="M8 0V3M8 13V16M0 8H3M13 8H16M2.300 2.300L4.500 4.500M11.500 11.500L13.700 13.700M13.700 2.300L11.500 4.500M4.500 11.500L2.300 13.700" stroke="#e6e6e6" strokeWidth="3" /></S></Cell>
      <Cell className="w-[17px]"><BigCaret /></Cell>
      <Cell className="ml-px w-[24px]"><S><path d="M8 0V16M0 8H16" stroke="#e6e6e6" strokeWidth="1.800" /></S></Cell>
      <Cell className="ml-[3px] w-[24px]"><S w={16}><path d="M1.500 1.500H6.500V6.500H1.500ZM10 16H4L7 10.500Z" stroke="#e6e6e6" /><circle cx="13" cy="8" r="2.500" stroke="#e6e6e6" /></S></Cell>
      <Cell className="ml-[3px] w-[22px]"><S w={16}><path d="M4 0H10L14 3V11H4Z" fill="#2a6fc4" /><path d="M2 1V6M0 4H6" stroke="#fff" /><path d="M0 9H6V15H0Z" fill="#f5b52c" /><path d="M6 12L9 15L15 8" stroke="#4cb64c" strokeWidth="2.500" /></S></Cell>
      <Cell className="ml-[3px] w-[48px] gap-[9px]">
        <S w={16} h={12}><path d="M.5 .5H15.500V11.500H.5Z" stroke="#e6e6e6" /><path d="M9 5L12.500 2.500M12.500 5V2.500H10M7 7L3.500 9.500M3.500 7V9.500H6" stroke="#e6e6e6" /></S>
        <S w={16} h={16}><path d="M0 2H16M0 8H16M0 14H16" stroke="#f0f0f0" strokeWidth="2" /></S>
      </Cell>
    </div>
  </div>
);

/* ---------- Windows taskbar ---------- */
const Task = ({ className = "", open, active, children }) => (
  <div className={"flex h-10 shrink-0 flex-col items-center justify-end " + (active ? "bg-[#54585b] " : "") + className}>
    <div className="flex grow items-center">{children}</div>
    <div className={"h-[2px] " + (active ? "w-full bg-[#76b9ed]" : open ? "w-10 bg-[#76b9ed]" : "")} />
  </div>
);
const Taskbar = () => (
  <div className="flex h-10 shrink-0 items-center bg-[#272c2e] text-white">
    <div className="flex w-12 justify-center"><S><path d="M0 2.500L6.500 1.500V7.500H0ZM7.500 1.300L16 0V7.500H7.500ZM0 8.500H6.500V14.500L0 13.500ZM7.500 8.500H16V16L7.500 14.700Z" fill="#fff" /></S></div>
    <div className="flex h-10 w-[344px] shrink-0 items-center border border-[#b5b5b5] bg-[#f1f1f1] pl-[11px]">
      <S><circle cx="10.500" cy="5.500" r="4.800" stroke="#222" strokeWidth="1.400" /><path d="M7 9L.5 15.500" stroke="#222" strokeWidth="1.400" /></S>
      <span className="ml-3 text-[15px] tracking-[-0.5px] text-[#333]">Type here to search</span>
    </div>
    <Task className="w-12"><S><circle cx="8" cy="8" r="6.800" stroke="#fff" strokeWidth="2" /></S></Task>
    <Task className="w-12"><S><path d="M1.500 0V2.500H10.500V0M1.500 16V13.500H10.500V16M1.500 4.500H10.500V11.500H1.500ZM14.500 0V3M14.500 8V16" stroke="#fff" /><path d="M13 4h3v3h-3z" fill="#fff" /></S></Task>
    <Task className="w-[54px]">
      <S w={24}><circle cx="12" cy="12" r="12" fill="#0c6fc9" /><path d="M0 11Q2 0 12 0Q24 0 24 10Q23 15 17 15Q14 15 15 12Q15 7 9 7Q3 7 0 11Z" fill="#35c1d6" /><path d="M16 1Q24 3 24 10Q23 15 17 15Q14 15 15 12Q19 6 16 1Z" fill="#5fdc6e" /><path d="M8 13Q8 20 16 21Q20 21 22 19Q18 25 10 24Q1 20 3 12Q6 8 10 9Q8 10 8 13Z" fill="#0b4fa8" /><path d="M10 11Q8 19 17 19Q21 19 23.500 16.500L22 19.500Q17 22 12 20Q8 17 8 13Z" fill="#272c2e" /></S>
    </Task>
    <Task className="w-[44px]" open><S w={22} h={20}><path d="M0 1H8L10 3H22V18H0Z" fill="#ffd667" /><path d="M0 0H9V4H0Z" fill="#e0a010" /><path d="M4 19V12Q4 10 6 10H16Q18 10 18 12V19H14V15H8V19Z" fill="#3c8fd4" /></S></Task>
    <Task className="w-[54px]"><S w={24} h={26}><path d="M6 7V1H18V7" stroke="#eee" strokeWidth="2" /><path d="M0 6H24V25H0Z" fill="#f6f6f6" /><path d="M7 11h4v4h-4z" fill="#f25022" /><path d="M12.500 11h4v4h-4z" fill="#7fba00" /><path d="M7 16.500h4v4h-4z" fill="#00a4ef" /><path d="M12.500 16.500h4v4h-4z" fill="#ffb900" /></S></Task>
    <Task className="w-[45px]"><S w={24}><path d="M0 9L12 0L24 9V24H0Z" fill="#1268b8" /><path d="M2 9H22V18H2Z" fill="#fff" /><path d="M0 9L12 17L24 9V24H0Z" fill="#35b4f0" /><path d="M0 24L24 9V24Z" fill="#1b98e0" /></S></Task>
    <Task className="w-[52px]" open>
      <S w={24}><circle cx="12" cy="12" r="12" fill="#fbc116" /><path d="M12 12L1.600 6A12 12 0 0 1 22.400 6Z" fill="#e24334" /><path d="M1.600 6A12 12 0 0 0 12 24L17 15L12 12L7 14.500Z" fill="#2ca24c" /><path d="M12 6.500H22.600A12 12 0 0 0 1.600 6L7 14Z" fill="#e24334" /><circle cx="12" cy="12" r="5.500" fill="#fff" /><circle cx="12" cy="12" r="4.300" fill="#4586f0" /></S>
    </Task>
    <Task className="w-[46px]"><S w={24}><circle cx="12" cy="12" r="12" fill="#e95420" /><circle cx="12.500" cy="12" r="5" stroke="#fff" strokeWidth="2" /><circle cx="5" cy="12" r="2.200" fill="#fff" stroke="#e95420" /><circle cx="16" cy="5.500" r="2.200" fill="#fff" stroke="#e95420" /><circle cx="16" cy="18.500" r="2.200" fill="#fff" stroke="#e95420" /></S></Task>
    <Task className="w-[50px]"><S w={16} h={24}><path d="M5 1H11V6H5Z" fill="#223" /><path d="M5 5H11V15H5Z" fill="#3c8bd0" /><path d="M5 5H7V15H5Z" fill="#9fd0f5" /><path d="M1 17H15V18.500H1Z" fill="#ddd" /><path d="M7 18H9V22H7ZM4 21H12V24H4Z" fill="#111" /><path d="M9 20h2v2h-2z" fill="#d33" /></S></Task>
    <Task className="w-[50px]"><S w={24}><circle cx="12" cy="12" r="11.300" fill="#6b2f94" stroke="#d8d8d8" strokeWidth="1.500" /><path d="M6 5L9 7H15L18 5Q19 8 18.500 10Q19 17 14 18H10Q5 17 5.500 10Q5 8 6 5Z" fill="#f2f2f2" /></S></Task>
    <Task className="w-[49px]">
      <div className="flex h-[22px] w-5 items-end justify-end bg-linear-to-br from-[#3a6a3a] via-[#241e80] to-[#2418d8] font-['Liberation_Serif',serif] text-[9px] leading-[11px] font-bold tracking-[-0.5px] text-[#e0b040]">TEX</div>
    </Task>
    <Task className="w-[48px]"><S w={24}><ellipse cx="12" cy="13" rx="10" ry="7" stroke="#e8762c" strokeWidth="2" /><path d="M22 0L1 24" stroke="#e4e4e4" strokeWidth="3" /><path d="M22 0L1 24" stroke="#111" strokeWidth="1.300" /><path d="M2 1L16 23H22L8 1Z" fill="#111" stroke="#ddd" strokeWidth=".8" /></S></Task>
    <Task className="w-[50px]" open><S w={22} h={24}><path d="M1 1H19V23H1Z" fill="#7fc41c" /><path d="M1 1H19V10H1Z" fill="#f4f8f0" /><path d="M1 1H19V23H1Z" stroke="#eee" /><path d="M5 7V13M8 7V11M11 11H17" stroke="#222" strokeWidth="1.500" /><path d="M20 2L14 15" stroke="#f0a52a" strokeWidth="2.500" /></S></Task>
    <Task className="w-12" active><div className="flex size-6 items-center justify-center bg-[#f6e6df]"><LogoA w={16} h={19} /></div></Task>
    <div className="ml-auto flex h-10 items-center pr-1 text-[12px]">
      <S w={12} h={8}><path d="M1 7L6 1.500L11 7" stroke="#fff" strokeWidth="1.400" /></S>
      <S w={16} h={14} className="ml-[10px]"><path d="M5 3H15.500V10.500H4M8 13.500H12M10 11V13.500M.5 1.500H4.500V5.500H.5ZM2.500 6V10.500H5" stroke="#fff" /></S>
      <S w={17} h={14} className="ml-[8px]"><path d="M1 5H3L6.500 1.500V12.500L3 9H1ZM9 5Q10.500 7 9 9M11.500 3.500Q14 7 11.500 10.500M14 1.500Q17.500 7 14 12.500" stroke="#fff" /></S>
      <span className="ml-[9px] w-[34px] tracking-[-0.3px]">ENG</span>
      <div className="flex w-[54px] flex-col items-center text-[12px] leading-[18px] tracking-[-0.5px]"><span>9:37 AM</span><span>3/9/2021</span></div>
      <S w={16} h={17} className="ml-[19px]"><path d="M.7 1H15.300V12.500H10L8 15.500L6 12.500H.7Z" stroke="#fff" strokeWidth="1.300" /></S>
      <div className="ml-[19px] h-10 w-px bg-[#555a5c]" />
    </div>
  </div>
);

export default function App() {
  return (
    <div className="flex h-[1080px] w-[1920px] flex-col overflow-hidden bg-white font-['Open_Sans',sans-serif]">
      <div className="relative h-[1040px] shrink-0 border-t-2 border-[#e4ebee] pr-[2px] pl-[2px]">
        <div className="flex h-[1038px] flex-col border border-[#0a86cc] bg-[#222933]">
          <TitleBar />
          <RibbonTabs />
          <Ribbon />
          <div className="mr-[3px] ml-[3px] h-[31px] shrink-0 border-b-4 border-[#3b4453]" />
          <Canvas />
          <StatusBar />
        </div>
        <AppMenu />
        <div className="absolute top-[6px] left-[7px] z-30 flex size-[40px] items-start bg-[#222933] pl-px">
          <div className="flex size-9 items-center justify-center bg-[#434b5a]"><LogoA w={25} h={28} /></div>
        </div>
      </div>
      <Taskbar />
    </div>
  );
}
